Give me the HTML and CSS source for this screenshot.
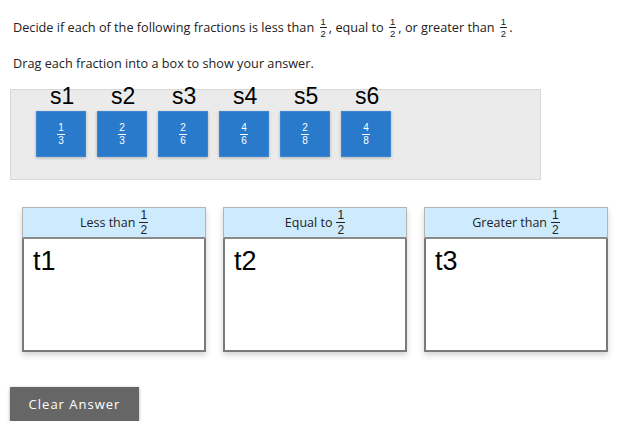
FILE: index.html
```html
<!DOCTYPE html>
<html>
<head>
<meta charset="utf-8">
<link rel="stylesheet" href="styles.css">
</head>
<body>
<div class="page">
  <p class="prompt">Decide if each of the following fractions is less than <span class="frac"><span class="num">1</span><span class="den">2</span></span>, equal to <span class="frac"><span class="num">1</span><span class="den">2</span></span>, or greater than <span class="frac"><span class="num">1</span><span class="den">2</span></span>.</p>
  <p class="prompt second">Drag each fraction into a box to show your answer.</p>

  <div class="source">
    <div class="tile"><span class="tag">s1</span><span class="frac"><span class="num">1</span><span class="den">3</span></span></div>
    <div class="tile"><span class="tag">s2</span><span class="frac"><span class="num">2</span><span class="den">3</span></span></div>
    <div class="tile"><span class="tag">s3</span><span class="frac"><span class="num">2</span><span class="den">6</span></span></div>
    <div class="tile"><span class="tag">s4</span><span class="frac"><span class="num">4</span><span class="den">6</span></span></div>
    <div class="tile"><span class="tag">s5</span><span class="frac"><span class="num">2</span><span class="den">8</span></span></div>
    <div class="tile"><span class="tag">s6</span><span class="frac"><span class="num">4</span><span class="den">8</span></span></div>
  </div>

  <div class="targets">
    <div class="target">
      <div class="target-head"><span>Less than</span><span class="frac big"><span class="num">1</span><span class="den">2</span></span></div>
      <div class="target-body"><span class="ttag">t1</span></div>
    </div>
    <div class="target">
      <div class="target-head"><span>Equal to</span><span class="frac big"><span class="num">1</span><span class="den">2</span></span></div>
      <div class="target-body"><span class="ttag">t2</span></div>
    </div>
    <div class="target">
      <div class="target-head"><span>Greater than</span><span class="frac big"><span class="num">1</span><span class="den">2</span></span></div>
      <div class="target-body"><span class="ttag">t3</span></div>
    </div>
  </div>

  <button class="clear">Clear Answer</button>
</div>
</body>
</html>
```

FILE: styles.css
```css
* { box-sizing: border-box; }
html, body { margin: 0; padding: 0; background: #fff; }
body {
  font-family: "Open Sans", "Liberation Sans", sans-serif;
  color: #222;
}
.page {
  padding: 15px 0 0 0;
  display: flex;
  flex-direction: column;
  align-items: flex-start;
}
.prompt {
  margin: 0 0 0 13px;
  font-size: 12.7px;
  line-height: 24px;
  height: 24px;
  display: flex;
  align-items: center;
  white-space: pre;
}
.prompt.second { margin-top: 12px; }

.frac {
  display: inline-flex;
  flex-direction: column;
  align-items: center;
  font-family: "Liberation Sans", Arial, sans-serif;
  font-size: 9.5px;
  line-height: 11px;
  margin: 0 2px;
  vertical-align: middle;
}
.frac .num {
  border-bottom: 1px solid currentColor;
  padding: 0 1px;
}

.source {
  margin: 14px 0 0 10px;
  width: 531px;
  height: 91px;
  background: #ebebeb;
  border: 1px solid #d8d8d8;
  display: flex;
  gap: 11px;
  padding: 21px 0 0 25px;
}
.tile {
  position: relative;
  width: 50px;
  height: 46px;
  background: #2a7acb;
  border: 1px solid #3d86cf;
  box-shadow: 0 1px 3px rgba(0,0,0,0.25);
  color: #fff;
  display: flex;
  align-items: center;
  justify-content: center;
}
.tile .frac { font-size: 10px; line-height: 12px; }
.tag {
  position: absolute;
  left: 13px;
  top: -30px;
  font-family: "Liberation Sans", Arial, sans-serif;
  font-size: 23px;
  line-height: 28px;
  color: #000;
}

.targets {
  margin: 27px 0 0 22px;
  display: flex;
  gap: 17px;
}
.target {
  width: 184px;
  display: flex;
  flex-direction: column;
  box-shadow: 0 3px 6px rgba(0,0,0,0.18);
}
.target-head {
  height: 32px;
  background: #cdebfc;
  border: 1px solid #b5b5b5;
  border-bottom: 2px solid #8a8a8a;
  display: flex;
  align-items: center;
  justify-content: center;
  font-size: 12.5px;
  color: #222;
}
.target-head .frac {
  font-size: 12px;
  line-height: 14px;
  margin: 0 0 0 4px;
}
.target-body {
  height: 113px;
  border: 2px solid #7a7a7a;
  border-top: none;
  background: #fff;
  padding: 7px 0 0 9px;
}
.ttag {
  font-family: "Liberation Sans", Arial, sans-serif;
  font-size: 27px;
  line-height: 30px;
  color: #000;
}

.clear {
  margin: 35px 0 0 10px;
  width: 129px;
  height: 34px;
  background: #666;
  border: none;
  box-shadow: 0 1px 3px rgba(0,0,0,0.35);
  color: #fff;
  font-family: "Open Sans", "Liberation Sans", sans-serif;
  font-size: 13px;
  letter-spacing: 1px;
  padding: 0;
}
```
